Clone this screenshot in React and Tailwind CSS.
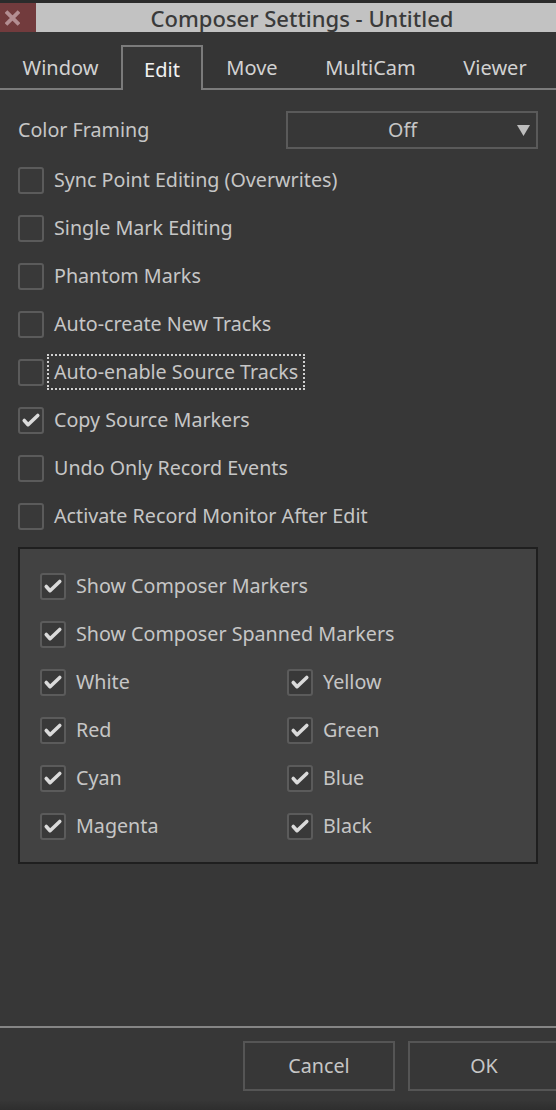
import React from "react";

const FONT = { fontFamily: '"Noto Sans", "Open Sans", sans-serif' };

function CheckMark() {
  return (
    <svg viewBox="0 0 26 27" className="w-full h-full">
      <polyline
        points="5,13.5 9.5,18.5 21,7.5"
        fill="none"
        stroke="#dadada"
        strokeWidth="4.2"
        strokeLinecap="round"
        strokeLinejoin="round"
      />
    </svg>
  );
}

function Check({ label, checked, focus }) {
  return (
    <div className="h-[48px] flex items-center">
      <div className="w-[26px] h-[27px] rounded-[3px] border-2 border-[#5b5b5b] bg-[#393939] shrink-0">
        {checked && <CheckMark />}
      </div>
      <span
        className={
          "ml-[8px] text-[19.7px] leading-[26px] text-[#c6c6c6] px-[2px] whitespace-nowrap " +
          (focus ? "outline-2 outline-dotted outline-[#d0d0d0] outline-offset-[3px]" : "")
        }
      >
        {label}
      </span>
    </div>
  );
}

const TABS = [
  { name: "Window", w: "w-[121px]" },
  { name: "Edit", w: "w-[82px]", active: true },
  { name: "Move", w: "w-[98px]" },
  { name: "MultiCam", w: "w-[139px]" },
  { name: "Viewer", w: "w-[110px]" },
];

const MAIN = [
  { label: "Sync Point Editing (Overwrites)" },
  { label: "Single Mark Editing" },
  { label: "Phantom Marks" },
  { label: "Auto-create New Tracks" },
  { label: "Auto-enable Source Tracks", focus: true },
  { label: "Copy Source Markers", checked: true },
  { label: "Undo Only Record Events" },
  { label: "Activate Record Monitor After Edit" },
];

const COLORS = [
  ["White", "Yellow"],
  ["Red", "Green"],
  ["Cyan", "Blue"],
  ["Magenta", "Black"],
];

export default function App() {
  return (
    <div className="w-[556px] h-[1110px] bg-[#373737] flex flex-col overflow-hidden" style={FONT}>
      {/* title bar */}
      <div className="pt-[3px] bg-[#2b2b2b]">
        <div className="h-[29px] flex">
          <div className="w-[36px] bg-[#723b3d] flex items-center pl-[5px]">
            <svg viewBox="0 0 16 16" className="w-[15px] h-[16px]">
              <path d="M2.5 2.5 L13.5 13.5 M13.5 2.5 L2.5 13.5" stroke="#b38e92" strokeWidth="4" strokeLinecap="square" />
            </svg>
          </div>
          <div className="flex-1 bg-[#c2c2c2] flex items-center justify-center pl-[12px] text-[22px] font-medium text-[#3a3a3a] leading-none">
            Composer Settings - Untitled
          </div>
        </div>
      </div>

      {/* tabs */}
      <div className="flex h-[58px] pt-[13px] bg-[#353535]">
        {TABS.map((t) =>
          t.active ? (
            <div
              key={t.name}
              className={t.w + " border-t-2 border-x-2 border-[#7b7b7b] bg-[#373737] flex items-center justify-center pt-[2px] text-[20px] text-[#f2f2f2]"}
            >
              {t.name}
            </div>
          ) : (
            <div
              key={t.name}
              className={t.w + " border-b-2 border-[#7b7b7b] flex items-center justify-center pt-[3px] text-[20px] text-[#d2d2d2]"}
            >
              {t.name}
            </div>
          )
        )}
        <div className="flex-1 border-b-2 border-[#7b7b7b]" />
      </div>

      {/* content */}
      <div className="px-[18px] pt-[21px]">
        <div className="flex items-center h-[38px]">
          <span className="w-[269px] text-[19.7px] text-[#c6c6c6]">Color Framing</span>
          <div className="w-[253px] h-[38px] border-2 border-[#5a5a5a] flex items-center">
            <span className="flex-1 text-center text-[19.7px] text-[#c6c6c6]">Off</span>
            <svg viewBox="0 0 12 10" className="w-[13px] h-[11px] mr-[6px]">
              <polygon points="0,0 12,0 6,10" fill="#bdbdbd" />
            </svg>
          </div>
        </div>

        <div className="mt-[7px]">
          {MAIN.map((m) => (
            <Check key={m.label} {...m} />
          ))}
        </div>

        <div className="mt-[7px] border-2 border-[#1f1f1f] bg-[#424242] pt-[13px] pb-[12px] pl-[20px]">
          <Check label="Show Composer Markers" checked />
          <Check label="Show Composer Spanned Markers" checked />
          {COLORS.map(([a, b]) => (
            <div key={a} className="grid grid-cols-[247px_1fr]">
              <Check label={a} checked />
              <Check label={b} checked />
            </div>
          ))}
        </div>
      </div>

      <div className="flex-1" />

      {/* footer */}
      <div className="border-t-2 border-[#858585] pt-[13px] pb-[10px] pl-[243px] flex gap-[13px]">
        <button className="w-[152px] h-[50px] shrink-0 border-2 border-[#555555] text-[19.7px] text-[#c6c6c6]">
          Cancel
        </button>
        <button className="w-[152px] h-[50px] shrink-0 border-2 border-[#555555] text-[19.7px] text-[#c6c6c6]">
          OK
        </button>
      </div>
      <div className="h-[9px] bg-gradient-to-b from-[#363636] to-[#2e2e2e]" />
    </div>
  );
}
